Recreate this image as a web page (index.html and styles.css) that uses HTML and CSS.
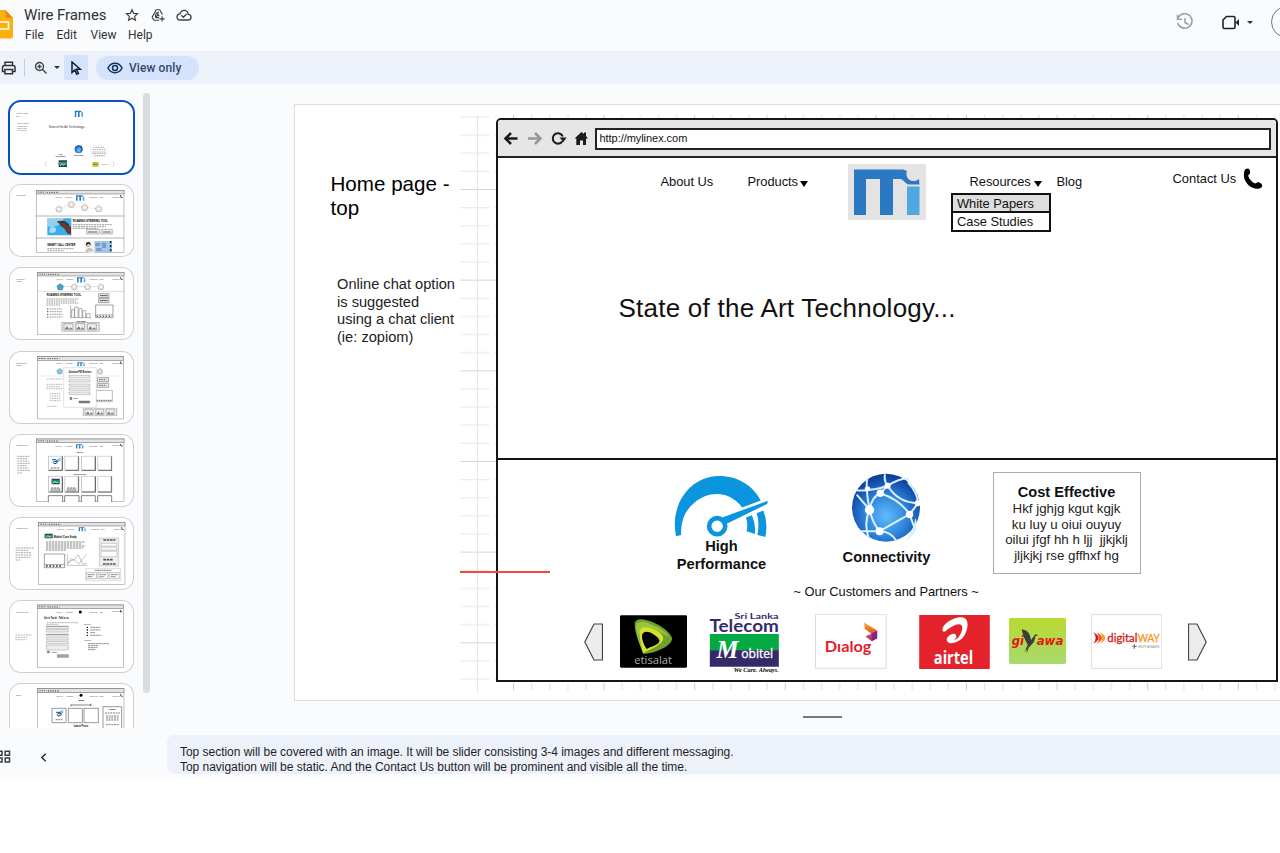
FILE: index.html
```html
<!DOCTYPE html>
<html lang="en">
<head>
<meta charset="utf-8">
<title>Wire Frames</title>
<link rel="stylesheet" href="styles.css">
</head>
<body>
<svg class="defs" width="0" height="0" aria-hidden="true">
  <defs>
    <symbol id="mi" viewBox="0 0 77 56" preserveAspectRatio="none">
      <path fill="#2b79c2" d="M6 5.500h49l4 1.500c-2 4 1 10 6 10 3 0 4-.5 6-2l.5 5.500H61c-3 0-6-5.500-9-5.500h-7v36H32V15H18v36H6z"/>
      <path fill="#4fa9e0" d="M59 22.500h12.500V51H59z"/>
    </symbol>
    <symbol id="phone" viewBox="0 0 20 22"><path d="M1.500 2.500C2 .5 5.500-.3 6.500 1.500c.8 2 .9 3.800 0 4.800C5.200 7 5 7.500 5.600 9c1.300 3 3.500 5 6 6.300 1.300.6 1.600-.7 3-1 2-.2 4.600 1.600 4.600 3.500 0 2-3 3.300-5.200 3C8.500 20.500 3 16 1.500 11 .5 8 .8 5 1.500 2.500z"/></symbol>
    <symbol id="chrome" viewBox="0 0 265 190" preserveAspectRatio="none" overflow="visible">
      <rect x=".8" y=".8" width="263" height="188" fill="#fff" stroke="#999" stroke-width="1.800"/>
      <rect x="1" y="1" width="263" height="11" fill="#e4e4e4" stroke="#777" stroke-width="1.800"/>
      <path d="M6 6.500h22M32 7h36" stroke="#555" stroke-width="3" stroke-dasharray="4 3"/>
      <g font-size="6" fill="#444"><text x="57" y="24" textLength="20" lengthAdjust="spacingAndGlyphs">About Us</text><text x="88" y="24" textLength="20" lengthAdjust="spacingAndGlyphs">Products</text><text x="160" y="24" textLength="24" lengthAdjust="spacingAndGlyphs">Resources</text><text x="191" y="24" textLength="10" lengthAdjust="spacingAndGlyphs">Blog</text><text x="229" y="23" textLength="23" lengthAdjust="spacingAndGlyphs">Contact Us</text></g>
      <use href="#phone" x="252" y="15" width="9" height="9"/>
    </symbol>
    <symbol id="penta" viewBox="0 0 20 20"><path d="M10 1l9 7-3.500 10h-11L1 8z" stroke="#888" stroke-width="1.500"/><circle cx="10" cy="10.500" r="5" fill="none" stroke="#999"/></symbol>
    <symbol id="card" viewBox="0 0 42 44" preserveAspectRatio="none"><path d="M1 1h38v40H1z" fill="#fff" stroke="#888" stroke-width="1.500"/><path d="M40.500 2v41H2" fill="none" stroke="#333" stroke-width="2"/></symbol>
    <symbol id="pics" viewBox="0 0 110 28"><path d="M1 1h108v26H1zM7 5h26v18H7zM41 5h26v18H41zM75 5h26v18H75z" fill="#eee" stroke="#777" stroke-width="1.500"/><path d="M9 21l7-9 6 9 4-6 6 6zM43 21l7-9 6 9 4-6 6 6zM77 21l7-9 6 9 4-6 6 6z" fill="#777"/></symbol>
    <linearGradient id="lime" x2="0" y2="1"><stop stop-color="#bada30"/><stop offset="1" stop-color="#a7d96f"/></linearGradient>
    <radialGradient id="ball" cx=".5" cy=".62" r=".6"><stop stop-color="#62bbfa"/><stop offset=".5" stop-color="#2f86dc"/><stop offset="1" stop-color="#0a3d9c"/></radialGradient>
    <linearGradient id="flame" x2="0" y2="1"><stop stop-color="#fbb03b"/><stop offset=".5" stop-color="#ed5a24"/><stop offset="1" stop-color="#a32a8d"/></linearGradient>
    <pattern id="rules" patternUnits="userSpaceOnUse" x="0" y="84" width="40" height="90.660"><path d="M0 .5h40" stroke="#d6d6d6"/><path d="M0 18.600h34M0 36.800h34M0 54.900h34M0 73h34" stroke="#e6e6e6"/></pattern>
    <pattern id="ticks" patternUnits="userSpaceOnUse" x="218" y="0" width="90.600" height="700"><path d="M.5 0v700" stroke="#ccc"/><path d="M18.600 0v700M36.800 0v700M54.900 0v700M73 0v700" stroke="#dedede"/></pattern>
  </defs>
</svg>

<div class="app">
  <header class="header">
    <svg class="app-icon" viewBox="0 0 13 29"><path fill="#fbb00d" d="M0 0h5.500L13 8v18.500a2 2 0 0 1-2 2H0z"/><path fill="#f08a10" d="M5.500 0L13 8H5.500z"/><path fill="none" stroke="#fff" stroke-width="1.600" d="M0 12h8.500v7H0"/></svg>
    <div class="heading">
      <div class="title-row">
        <span class="doc-title">Wire Frames</span>
        <svg class="ti star" viewBox="0 0 24 24"><path d="M12 3l2.700 6.200 6.800.6-5.100 4.500 1.500 6.700-5.900-3.500L6.100 21l1.500-6.700-5.100-4.500 6.800-.6z"/></svg>
        <svg class="ti drive" viewBox="0 0 24 24"><path d="M14 21H5l-3-5L9 3h6l4.500 8M14 16.500H8.500l3.500-6 2 3.500M8.500 16.500C6 13 8.500 7.500 13.500 7.500M19 14v9M14.500 18.500h9"/></svg>
        <svg class="ti cloud" viewBox="0 0 24 24"><path d="M6.500 19.500C3.500 19.500 1.500 17.500 1.500 15s2-4.500 4.500-4.700C7 7 9 5 12 5c3.500 0 6 2.500 6.400 6 2.500.2 4.100 2 4.100 4.200 0 2.500-2 4.300-4.500 4.300zM8 12.500l3 3 5-5"/></svg>
      </div>
      <nav class="menus"><span class="m-file">File</span><span class="m-edit">Edit</span><span class="m-view">View</span><span>Help</span></nav>
    </div>
    <div class="header-tools">
      <svg class="history" viewBox="0 0 18 18"><path d="M2.200 4.600A7.300 7.300 0 1 1 1.700 10M1.500 1.800v4.400H6M9 5v4.500l3.500 2"/></svg>
      <svg class="camera" viewBox="0 0 18 15"><path d="M4.500 1.500h7c1 0 1.500.5 1.500 1.500v9c0 1-.5 1.500-1.500 1.500h-9C1.500 13.500 1 13 1 12V5z"/><path class="lens" d="M13.500 7.500L17 4v7z"/></svg>
      <i class="caret"></i>
      <span class="share"></span>
    </div>
  </header>

  <div class="toolbar">
    <svg class="print" viewBox="0 0 16 14"><path d="M4 4.500V1.200h7.500v3.300M4 10.500H1.500v-4c0-1.300.8-2 2-2h8.500c1.300 0 2 .7 2 2v4h-2.500M4 8.500h7.500v4.300H4z"/></svg>
    <span class="sep"></span>
    <svg class="magnify" viewBox="0 0 14 14"><circle cx="5.500" cy="5.500" r="4"/><path d="M8.500 8.500l4 4M5.500 3.500v4M3.500 5.500h4"/></svg>
    <i class="caret"></i>
    <span class="pointer"><svg viewBox="0 0 12 14"><path d="M2 1v10.500l2.800-2.500 2 4.300 1.600-.8L6.500 8.300h3.800z"/></svg></span>
    <span class="view-only"><svg viewBox="0 0 16 12"><path d="M1 6c3-6.300 11-6.300 14 0-3 6.300-11 6.300-14 0z"/><circle cx="8" cy="6" r="2.500"/></svg>View only</span>
  </div>

  <main class="workspace">
    <aside class="side">
      <div class="film">
        <div class="thumbs">
          <svg class="thumb active" viewBox="27 33 375 219">
            <g font-size="7" fill="#555"><text x="49" y="72">Home page -</text><text x="49" y="80">top</text><g font-size="5.500"><text x="51" y="103">Online chat op</text><text x="51" y="110">is suggested</text><text x="51" y="117">using a chat</text><text x="51" y="124">(ie: zopiom)</text></g></g>
            <use href="#mi" x="222" y="60" width="29" height="23"/>
            <text x="146" y="115" font-size="9" textLength="112" lengthAdjust="spacingAndGlyphs" fill="#333">State of the Art Technology...</text>
            <circle cx="236" cy="178" r="12" fill="url(#ball)"/><path d="M228 170l13 5-4 13M231 184l10-9" stroke="#b8ddfa" fill="none"/>
            <g font-size="5" font-weight="bold" text-anchor="middle" fill="#333"><text x="182" y="194">High</text><text x="182" y="200">Performance</text><text x="236" y="198">Connectivity</text></g>
            <rect x="272" y="165" width="51" height="35" fill="#fff" stroke="#ddd"/>
            <path d="M280 172h34M277 179h42M278 186h40M276 191h43M282 197h32" stroke="#888" stroke-width="2" stroke-dasharray="5 2"/>
            <path d="M140 215l-4 8 4 8M338 215l4 8-4 8" stroke="#aaa" fill="none" stroke-width="1.500"/>
            <path fill="#39356e" d="M176 211h25v20h-25z"/><path fill="#14a84b" d="M176 216h25v9h-25z"/><path d="M180 228l6-7 4 5 5-4" stroke="#fff" stroke-width="2" fill="none"/>
            <path fill="#a9d13d" d="M277 216h19v14h-19z"/><path d="M280 223h13" stroke="#933" stroke-width="2"/><text x="305" y="225" font-size="5" fill="#d33">digital<tspan fill="#e90">WAY</tspan></text>
          </svg>
          <svg class="thumb" viewBox="27 283 375 219">
            <text x="49" y="320" font-size="7" fill="#555">Products</text>
            <use href="#chrome" x="108" y="301" width="265" height="189"/><use href="#mi" x="226" y="315" width="29" height="20"/>
            <path d="M188 353l16-7M224 345l20 7M265 354l20 3" stroke="#bbb"/>
            <g fill="#fff"><use href="#penta" x="166" y="347" width="22" height="22"/><use href="#penta" x="203" y="333" width="22" height="22"/><use href="#penta" x="243" y="342" width="22" height="22"/><use href="#penta" x="285" y="346" width="22" height="22"/></g>
            <path d="M108 379h264M108 445h264" stroke="#666" stroke-width="1.500"/>
            <path fill="#39aeea" d="M142 386h72v51h-72z"/><path fill="#dceff8" d="M142 386h50l-8 18c-14 2-20 12-42 6z" opacity=".55"/><path fill="#a9dcf5" d="M150 415c10-6 20-2 18 8-4 8-16 8-20 4z"/><path d="M176 398l8-5 29 18v24c-17-1-13-16-25-22-7-3-11-8-12-15z" fill="#623b31"/><path d="M172 397l20-1 14 10" stroke="#333" stroke-width="5" fill="none"/>
            <text x="218" y="398" font-size="11" font-weight="bold" textLength="106" lengthAdjust="spacingAndGlyphs">ROAMING STEERING TOOL</text>
            <path d="M218 405h117M218 411h100M218 416h75" stroke="#888" stroke-width="2.500" stroke-dasharray="6 2"/><path fill="#eee" stroke="#444" d="M260 419h38v14h-38zM303 419h34v14h-34z"/><path d="M264 427h28M308 427h24" stroke="#666" stroke-width="3"/>
            <text x="142" y="470" font-size="9" font-weight="bold" textLength="84" lengthAdjust="spacingAndGlyphs">SMART CALL CENTER</text><path d="M142 477h80M142 483h50" stroke="#888" stroke-width="2.500" stroke-dasharray="6 2"/>
            <path fill="#9ec9ea" d="M279 454h57v35h-57z"/><path fill="#f4f4f4" d="M254 454h30v35h-30z"/><circle cx="265" cy="464" r="7" fill="#222"/><circle cx="266" cy="467" r="5" fill="#ecc5a8"/><path d="M258 489c0-14 17-16 21-5" fill="#ccc" stroke="#444"/><path fill="#7f97c9" d="M286 460h14v9h-14zM306 459h12v16h-12zM289 475h15v9h-15z"/><path d="M332 454v35" stroke="#333" stroke-width="5" stroke-dasharray="7 5"/>
          </svg>
          <svg class="thumb" viewBox="27 532 375 219">
            <g font-size="7" fill="#555"><text x="49" y="570">Product</text><text x="49" y="578">Page</text></g>
            <use href="#chrome" x="112" y="547" width="261" height="188"/><use href="#mi" x="229" y="561" width="29" height="19"/>
            <path d="M190 591h102M112 605h260" stroke="#999"/>
            <use href="#penta" x="169" y="580" width="23" height="23" fill="#2aa9d8"/><g fill="#fff"><use href="#penta" x="212" y="581" width="21" height="21"/><use href="#penta" x="252" y="581" width="21" height="21"/><use href="#penta" x="292" y="581" width="21" height="21"/></g>
            <text x="140" y="618" font-size="9" font-weight="bold" textLength="103" lengthAdjust="spacingAndGlyphs">ROAMING STEERING TOOL</text>
            <path d="M140 628h95M140 634h90M140 640h95M140 646h40M149 658h38M149 666h38M149 674h38M149 682h38" stroke="#888" stroke-width="2.500" stroke-dasharray="5 2"/><path d="M141 658h4M141 666h4M141 674h4M141 682h4" stroke="#444" stroke-width="3"/>
            <path fill="#fff" stroke="#666" stroke-width="1.500" d="M212 648v36h61M215 684v-24h8v24M224 684v-32h10v32M237 684v-27h9v27M248 684v-21h9v21M260 684v-12h10v12"/>
            <path fill="#eee" stroke="#555" stroke-width="1.500" d="M296 612h31v12h-31zM296 627h31v12h-31z"/><path d="M300 618h23M300 633h23" stroke="#555" stroke-width="3"/><path fill="#fff" stroke="#444" stroke-width="1.500" d="M287 646h52v38h-52zM287 676h52"/><path d="M290 680h46" stroke="#333" stroke-width="3" stroke-dasharray="4 5"/>
            <text x="230" y="696" font-size="6" font-weight="bold" textLength="27" lengthAdjust="spacingAndGlyphs">Case Studies</text><use href="#pics" x="183" y="697" width="117" height="29"/>
          </svg>
          <svg class="thumb" viewBox="27 15 375 219">
            <g font-size="7" fill="#555"><text x="49" y="54">Download</text><text x="49" y="61">Page</text></g>
            <use href="#chrome" x="111" y="31" width="261" height="189"/><use href="#mi" x="230" y="47" width="26" height="15"/><path d="M112 90h258" stroke="#ccc"/>
            <use href="#penta" x="169" y="66" width="20" height="20" fill="#76d7f0"/><use href="#penta" x="290" y="66" width="20" height="20" fill="#eee"/>
            <path d="M140 99h49M140 115h48M140 122h40M140 128h47M149 143h32M149 150h32M149 157h32M149 164h32M142 181h30" stroke="#aaa" stroke-width="2.500" stroke-dasharray="5 2"/>
            <path fill="#eee" stroke="#555" stroke-width="1.500" d="M292 95h34v12h-34zM292 112h34v12h-34z"/><path fill="#fff" stroke="#777" stroke-width="1.500" d="M288 133h49v34h-49z"/><path d="M289 163h46M297 101h22M297 118h22" stroke="#666" stroke-width="3" stroke-dasharray="5 2"/>
            <use href="#pics" x="244" y="185" width="112" height="26"/><path fill="#fff" stroke="#aaa" d="M191 65h98v119h-98z"/>
            <text x="206" y="81" font-size="8" font-weight="bold" textLength="68" lengthAdjust="spacingAndGlyphs">Download PDF Brochure</text><path fill="#eee" stroke="#777" d="M207 88h63v7h-63zM207 101h63v7h-63zM207 114h63v7h-63zM207 126h63v7h-63zM207 138h63v8h-63z"/><text x="217" y="160" font-size="6">I agree</text><path d="M210 154h5v7h-5zM237 165h32v6h-32z" fill="#888" stroke="#333"/>
          </svg>
          <svg class="thumb" viewBox="27 266 375 219">
            <text x="49" y="303" font-size="7" fill="#555">Customers</text><path d="M52 333h36M52 340h30M52 347h34M52 354h37M52 361h28M52 368h34M52 375h38M52 383h14" stroke="#999" stroke-width="2.500" stroke-dasharray="6 2"/>
            <use href="#chrome" x="108" y="280" width="265" height="190"/><use href="#mi" x="226" y="295" width="26" height="16"/>
            <g font-size="6.500" font-weight="bold"><text x="230" y="324" textLength="19" lengthAdjust="spacingAndGlyphs">TELCO</text><text x="222" y="388" textLength="36" lengthAdjust="spacingAndGlyphs">BANKS &amp; OTHER</text></g>
            <use href="#card" x="144" y="331" width="45" height="46"/><use href="#card" x="193" y="331" width="45" height="46"/><use href="#card" x="243" y="331" width="45" height="46"/><use href="#card" x="292" y="331" width="45" height="46"/>
            <use href="#card" x="144" y="391" width="45" height="51"/><use href="#card" x="193" y="391" width="45" height="51"/><use href="#card" x="243" y="391" width="45" height="51"/><use href="#card" x="292" y="391" width="45" height="51"/>
            <path d="M145 470v-19h43v19M194 470v-19h43v19M244 470v-19h42v19M293 470v-19h42v19" fill="#fff" stroke="#444" stroke-width="2"/>
            <path d="M156 343h9c9 0 9 12 0 12-5 0-7-4-3-7h11" fill="none" stroke="#124b83" stroke-width="3"/><path d="M172 344l10-5M174 348l8-4" stroke="#37a8df" stroke-width="3"/><path d="M152 368h28M153 428h28M201 428h28" stroke="#777" stroke-width="3" stroke-dasharray="7 2"/><path fill="#39356e" d="M155 400h24v17h-24z"/><path fill="#14a84b" d="M155 405h24v8h-24z"/><path d="M158 414l7-6 4 5 6-3" fill="none" stroke="#fff" stroke-width="2"/><path fill="#ddd" stroke="#333" d="M153 431h27v5h-27zM201 431h27v5h-27z"/>
          </svg>
          <svg class="thumb" viewBox="27 515 375 219">
            <text x="49" y="552" font-size="7" fill="#555">Customers</text><path d="M47 608h54M47 615h40M47 622h48M47 629h50M47 636h43M47 644h16" stroke="#999" stroke-width="2.500" stroke-dasharray="6 2"/>
            <use href="#chrome" x="115" y="530" width="261" height="189"/><use href="#mi" x="234" y="544" width="25" height="15"/>
            <path fill="#39356e" d="M134 565h24v14h-24z"/><path fill="#14a84b" d="M134 569h24v7h-24z"/><path d="M138 577l6-6 4 5 6-3" fill="none" stroke="#fff" stroke-width="2"/><text x="161" y="579" font-size="9" font-weight="bold" textLength="69" lengthAdjust="spacingAndGlyphs">Mobitel Case Study</text>
            <path d="M138 590h117M138 596h108M138 602h118M138 608h112M138 614h60" stroke="#888" stroke-width="3" stroke-dasharray="7 2"/><path fill="#fff" stroke="#444" stroke-width="1.500" d="M133 626h61v41h-61zM133 658h61"/><path d="M138 662h50" stroke="#333" stroke-width="4" stroke-dasharray="5 5"/><path fill="none" stroke="#888" stroke-width="1.500" d="M202 626v34h60M204 657l10-18 7 7 14-18 13 29 12-4M204 651l18-9 14 14 24-29"/>
            <path fill="#eee" stroke="#888" d="M298 578h58v84h-58z"/><path fill="#fff" stroke="#777" d="M303 594h48v8h-48zM303 606h48v8h-48zM303 618h48v16h-48z"/><path d="M310 584h36M310 643h28M309 656h38" stroke="#555" stroke-width="5" stroke-dasharray="8 2"/><path fill="#fff" stroke="#999" d="M257 670h105v36H257z"/><path fill="#fff" stroke="#444" d="M260 682h30v18h-30zM294 682h30v18h-30zM328 682h30v18h-30z"/><path d="M284 675h50M264 688h20M298 688h20M333 688h20M264 694h14M298 694h15M333 694h15" stroke="#666" stroke-width="2.500" stroke-dasharray="6 1"/>
          </svg>
          <svg class="thumb" viewBox="27 30 375 219">
            <text x="49" y="68" font-size="7" fill="#555">Contact Us</text><path d="M46 135h50M46 142h36M46 149h34" stroke="#999" stroke-width="2" stroke-dasharray="6 2"/>
            <use href="#chrome" x="111" y="44" width="261" height="189"/><circle cx="241" cy="66" r="4.500"/>
            <text x="132" y="86" font-size="8.500" font-weight="bold" textLength="74" lengthAdjust="spacingAndGlyphs">Get in Touch - Talk to us</text><path d="M140 98h95M140 103h35" stroke="#888" stroke-width="2" stroke-dasharray="6 2"/>
            <path fill="#eee" stroke="#777" d="M139 109h66v7h-66zM139 119h66v7h-66zM139 133h66v5h-66zM139 143h66v7h-66zM139 154h66v7h-66zM139 165h66v15h-66z"/><path d="M139 109h66M139 133h66" stroke="#333"/><text x="153" y="190" font-size="6">I agree</text><path d="M142 183h6v6h-6zM172 194h33v8h-33z" fill="#aaa" stroke="#333"/>
            <g font-size="6" fill="#333"><text x="251" y="104">Contact</text><text x="251" y="153">Address</text></g><path d="M271 112h30M271 120h30M271 128h14M271 136h33M264 161h64M264 167h30M264 173h28M264 179h22" stroke="#777" stroke-width="2.500" stroke-dasharray="7 1"/><path d="M262 110v30" stroke="#222" stroke-width="4" stroke-dasharray="4 4"/>
          </svg>
          <svg class="thumb" viewBox="27 279 375 219">
            <text x="49" y="317" font-size="7" fill="#555">Blog</text>
            <use href="#chrome" x="112" y="295" width="261" height="205"/><circle cx="243" cy="316" r="4.500"/><text x="236" y="334" font-size="7" font-weight="bold">Blog</text><path d="M213 345h62M213 343v6M272 341v7" stroke="#444" stroke-width="2"/>
            <path fill="#fff" stroke="#666" stroke-width="2" d="M156 355h42v43h-42zM205 355h42v43h-42zM252 355h43v43h-43zM309 350h56v80h-56z"/><path d="M168 367h9c9 0 9 11 0 11-5 0-7-4-3-7h9" fill="none" stroke="#124b83" stroke-width="3"/><path d="M180 365l10-3M183 369l7-3" stroke="#37a8df" stroke-width="3"/><path d="M167 389h20M315 369h45M318 378h38M318 384h38M318 390h38M318 404h38" stroke="#666" stroke-width="2.500" stroke-dasharray="6 2"/><text x="327" y="361" font-size="7" font-weight="bold">Posts</text><text x="221" y="410" font-size="8" font-weight="bold" textLength="44" lengthAdjust="spacingAndGlyphs">Latest Posts</text>
          </svg>
        </div>
        <div class="scrollbar"></div>
      </div>
      <div class="side-tools">
        <svg class="grid-icon" viewBox="0 0 11 13"><path d="M-4 1.200h6v4h-6zM-4 8h6v4h-6zM5.200 1.200h4.300v4H5.200zM5.200 8h4.300v4H5.200z"/></svg>
        <svg class="chevron" viewBox="0 0 6 8"><path d="M5 .7L1.500 4 5 7.300"/></svg>
      </div>
    </aside>

    <section class="stage">
      <div class="slide">
        <svg class="graph" width="990" height="596"><path fill="url(#rules)" d="M165 10h36v578h-36z"/><path d="M182.500 10v578" stroke="#e6e6e6"/><path fill="url(#ticks)" d="M201 10h785v4H201zM201 578h785v7H201z"/></svg>
        <p class="note-title">Home page -<br>top</p>
        <p class="note-chat">Online chat option<br>is suggested<br>using a chat client<br>(ie: zopiom)</p>

        <div class="browser">
          <div class="browser-bar">
            <svg class="bi" viewBox="0 0 84 20" width="84" height="20">
              <path d="M15.500 10.500H3.500M9 5l-5.500 5.500L9 16" fill="none" stroke="#1c1c1c" stroke-width="2.600"/>
              <path d="M26 10.500h11.500M33 5l5.500 5.500L33 16" fill="none" stroke="#999" stroke-width="2.600"/>
              <path d="M60.500 13a5.200 5.200 0 1 1 .3-4.500" fill="none" stroke="#1c1c1c" stroke-width="2"/><path d="M57.500 9.500h7L61.500 14z" fill="#1c1c1c"/>
              <path fill="#1c1c1c" d="M72.500 10.500L79.500 4l2.500 2V4.500h2V8l2 2.500h-2V17H81v-4.500h-3V17h-3.700v-6.500z"/>
            </svg>
            <div class="url">http://mylinex.com</div>
          </div>
          <div class="hero">
            <nav class="site-nav">
              <span class="link">About Us</span>
              <span class="link">Products<i class="tri"></i></span>
              <svg class="logo"><rect width="78" height="56" fill="#e3e3e3"/><use href="#mi" width="77" height="56"/></svg>
              <div class="link has-menu">Resources<i class="tri"></i>
                <ul class="menu"><li>White Papers</li><li>Case Studies</li></ul>
              </div>
              <span class="link">Blog</span>
              <span class="contact">Contact Us<svg><use href="#phone"/></svg></span>
            </nav>
            <h1>State of the Art Technology...</h1>
          </div>
          <div class="features">
            <div class="feature">
              <svg class="gauge" viewBox="672 76 284 188">
                <path fill="#0a95de" d="M681 259c-19-92 39-178 127-180 61 0 105 31 126 73l-55 21c-39-52-101-51-145-13-28 25-38 52-38 95z"/>
                <path fill="#0a95de" d="M890 203l18-7q12 26 9 56l-25-8q5-24-2-41zM922 190l20-8q15 37 6 79l-24-6q8-36-2-65z"/>
                <path fill="#0a95de" d="M819 203l136-50-1 9-126 62z"/><circle cx="804" cy="229" r="24" fill="#fff" stroke="#0a95de" stroke-width="14"/>
              </svg>
              <strong>High<br>Performance</strong>
            </div>
            <div class="feature">
              <svg class="globe" viewBox="216 68 208 208">
                <circle cx="320" cy="171" r="101" fill="url(#ball)"/>
                <g fill="none" stroke="#d8efff" stroke-width="6"><path d="M233 120q60 0 90-14 50-28 66-20M317 72q-4 20 8 34l-22 22q-25 10-32 49l-38-45M265 84q-7 20 6 94-18 38-2 85M271 178q10 40 30 63l88-50M303 128q60 20 87 63l18 48M325 106q30 50 90 52M301 241q35 0 50 30M390 191l25-33q0-30-30-62M240 241l60 0"/></g>
                <g fill="#fff"><circle cx="271" cy="178" r="14"/><circle cx="390" cy="191" r="11"/><circle cx="301" cy="241" r="12"/><circle cx="303" cy="128" r="11"/><circle cx="325" cy="106" r="9"/><circle cx="265" cy="115" r="8"/><circle cx="414" cy="158" r="9"/></g>
                <path d="M377 271q48-30 30-70-3 35-30 70z" fill="#d8efff"/>
              </svg>
              <strong>Connectivity</strong>
            </div>
            <div class="cost"><strong>Cost Effective</strong><p>Hkf jghjg kgut kgjk<br>ku luy u oiui ouyuy<br>oilui jfgf hh h ljj &nbsp;jjkjklj<br>jljkjkj rse gffhxf hg</p></div>
          </div>
          <div class="partners-title">~ Our Customers and Partners ~</div>
          <div class="partners">
            <svg class="arrow" viewBox="0 0 19 38"><path d="M10 1h8.500v36H10L.8 19z"/></svg>
            <svg class="etisalat" viewBox="150 45 201 157"><rect x="150" y="45" width="201" height="157" rx="4"/><path fill="#6f9f2c" d="M194 71c0-12 14-18 34-12 37 9 73 35 78 54 4 18-41 45-86 48-10-27-26-61-26-90z"/><path fill="#9ac43b" d="M199 74c2-11 21-12 37-5 35 13 58 30 60 42-18-17-68-35-86-22-7 8 0 39 9 67-9-22-23-59-20-82z"/><path fill="#d4e02b" d="M208 96c0-16 22-19 40-10 20 7 32 18 32 29 0 15-34 30-61 43-5-20-11-43-11-62z"/><path d="M216 108c0-16 16-18 33-7 18 12 25 21 14 29-10 8-21 8-33 16-6-8-14-25-14-38z"/><text x="193" y="190" font-family="Open Sans" font-size="32" fill="#aaa" textLength="113" lengthAdjust="spacingAndGlyphs">etisalat</text></svg>
            <svg class="mobitel" viewBox="418 34 212 186"><g fill="#352a69" font-family="Lato" font-weight="bold"><text x="494" y="56" font-size="25" textLength="132" lengthAdjust="spacingAndGlyphs">Sri Lanka</text><text x="419" y="95" font-size="50" textLength="208" lengthAdjust="spacingAndGlyphs">Telecom</text></g><path fill="#05a944" d="M420 100h207v50H420z"/><path fill="#352a69" d="M420 149h207v49H420z"/><text x="440" y="173" font-family="Liberation Serif" font-style="italic" font-weight="bold" font-size="74" fill="#fff">M</text><text x="514" y="171" font-family="Open Sans" font-size="39" fill="#fff" stroke="#fff" textLength="96" lengthAdjust="spacingAndGlyphs">obitel</text><text x="492" y="214" font-family="Liberation Serif" font-style="italic" font-weight="bold" font-size="18" textLength="135" lengthAdjust="spacingAndGlyphs">We Care. Always.</text></svg>
            <svg class="dialog" viewBox="736 43 214 164"><path fill="#fff" stroke="#ddd" stroke-width="3" d="M737 44h211v161H737z"/><text x="765" y="155" font-family="Lato" font-weight="bold" font-size="47" fill="#e3202d" textLength="139" lengthAdjust="spacingAndGlyphs">Dıalog</text><path fill="url(#flame)" d="M882 68l39 24v24l-16 8-19-15 18-7-20-15z"/><path fill="#82248b" d="M904 101l17-8v22l-15 8z"/></svg>
            <svg class="airtel" viewBox="57 59 213 163"><path fill="#e4222c" d="M57 59h213v163H57z"/><path fill="#fff" d="M127 105c0-20 34-40 58-39 25 1 22 38 4 61-15 17-48 25-49 7-1-12 25-28 29-12 2 6-5 13-10 11 13 4 27-18 28-35 1-17-19-13-38 0-12 8-18 17-22 7z"/><text x="101" y="208" font-family="Open Sans" font-weight="bold" font-size="55" fill="#fff" textLength="119" lengthAdjust="spacingAndGlyphs">airtel</text></svg>
            <svg class="giyawa" viewBox="327 69 171 138"><rect x="327" y="69" width="171" height="138" rx="5" fill="url(#lime)"/><g font-family="DejaVu Sans" font-style="italic" font-weight="bold" font-size="36" fill="#e21717"><text x="335" y="149" textLength="37" lengthAdjust="spacingAndGlyphs">gi</text><text x="410" y="149" textLength="80" lengthAdjust="spacingAndGlyphs">awa</text></g><path fill="#39403a" d="M365 103c20 2 25 15 28 32l13-17 9 2-9 4c0 20-18 31-32 47l9-22c-8-15-15-27-18-46z"/><path d="M387 151l-7 21" stroke="#555" stroke-width="3"/></svg>
            <svg class="digital" viewBox="573 58 213 163"><path fill="#fff" stroke="#ddd" stroke-width="3" d="M574 59h211v161H574z"/><path fill="#d71920" d="M580 112q32 17 0 34 14-17 0-34z"/><path fill="#ec5a24" d="M590 112q32 17 0 34 14-17 0-34z"/><path fill="#f7a021" d="M600 112q32 17 0 34 14-17 0-34z"/><text x="622" y="140" font-family="Lato" font-size="36" fill="#d71920" stroke="#d71920" textLength="90" lengthAdjust="spacingAndGlyphs">digital</text><text x="713" y="140" font-family="Lato" font-size="35" fill="#f59a23" stroke="#f59a23" textLength="66" lengthAdjust="spacingAndGlyphs">WAY</text><path d="M703 148v13M697 154h13" stroke="#777" stroke-width="4"/><text x="713" y="158" font-family="Liberation Sans" font-size="9" fill="#888" textLength="65" lengthAdjust="spacingAndGlyphs">GRUPO ASSADEM</text></svg>
            <svg class="arrow next" viewBox="0 0 19 38"><path d="M9 1H.5v36H9l9.200-18z"/></svg>
          </div>
        </div>
        <div class="red-line"></div>
      </div>
      <div class="grip"></div>
      <div class="speaker-notes">Top section will be covered with an image. It will be slider consisting 3-4 images and different messaging.<br>Top navigation will be static. And the Contact Us button will be prominent and visible all the time.</div>
    </section>
  </main>
</div>
</body>
</html>
```
FILE: styles.css
```css
* { box-sizing: border-box; }
body { margin: 0; background: #fff; height: 853px; overflow: hidden; font-family: "Liberation Sans", Arial, sans-serif; }
p, h1, ul { margin: 0; padding: 0; }
svg { display: block; flex: none; }
.defs { position: absolute; }
.app { height: 777px; background: #f9fbfd; overflow: hidden; display: flex; flex-direction: column; }

.header { height: 51px; display: flex; flex: none; font-family: Roboto, sans-serif; color: #303236; }
.app-icon { width: 13px; height: 29px; margin-top: 10px; }
.heading { margin-left: 11px; padding-top: 5px; width: 260px; }
.title-row { display: flex; align-items: center; height: 20px; }
.doc-title { font-size: 15px; width: 101px; letter-spacing: -.1px; white-space: nowrap; }
.ti { width: 14px; height: 14px; fill: none; stroke: #3c4043; stroke-width: 2; }
.drive { margin-left: 12px; }
.cloud { margin-left: 11px; width: 16px; height: 16px; }
.menus { display: flex; font-size: 12px; line-height: 21px; margin-left: 1px; }
.m-file { width: 31.500px; } .m-edit { width: 34px; } .m-view { width: 37.500px; }
.header-tools { margin-left: auto; display: flex; align-items: center; height: 44px; width: 104px; }
.history { width: 18px; height: 18px; fill: none; stroke: #9a9da1; stroke-width: 1.500; }
.camera { width: 18px; height: 15px; margin-left: 28px; fill: none; stroke: #202124; stroke-width: 1.600; }
.camera path { stroke-linejoin: round; }
.camera .lens { fill: #202124; stroke: none; }
.caret { display: block; border: 3.500px solid transparent; border-top-color: #333; border-bottom: 0; flex: none; }
.camera + .caret { margin-left: 7px; }
.share { width: 36px; height: 32px; border: 1px solid #777; border-radius: 16px; margin-left: 18px; flex: none; }

.toolbar { height: 33px; flex: none; background: #edf1fa; display: flex; align-items: center; }
.print { width: 16px; height: 14px; margin-left: 1px; fill: none; stroke: #333; stroke-width: 1.500; }
.sep { width: 1px; height: 17px; background: #c9ccd2; margin-left: 7px; }
.magnify { width: 14px; height: 14px; margin-left: 9px; fill: none; stroke: #3c4043; stroke-width: 1.400; }
.magnify + .caret { margin-left: 6px; }
.pointer { width: 24px; height: 25px; background: #d5e2fb; border-radius: 2px; margin-left: 4px; display: flex; align-items: center; justify-content: center; }
.pointer svg { width: 12px; height: 14px; fill: none; stroke: #0d1b3e; stroke-width: 1.500; }
.view-only { width: 103px; height: 24px; margin-left: 8px; padding-left: 11px; border-radius: 12px; background: #d5e2fb; display: flex; align-items: center; gap: 6px; font: 500 12px Roboto, sans-serif; letter-spacing: .1px; color: #33496f; white-space: nowrap; }
.view-only svg { width: 16px; height: 12px; fill: none; stroke: #16305c; stroke-width: 1.500; }

.workspace { flex: 1; min-height: 0; display: flex; }
.side { width: 167px; flex: none; }
.film { height: 644px; overflow: hidden; display: flex; }
.thumbs { width: 143px; padding: 17px 0 0 9px; display: flex; flex-direction: column; gap: 10.200px; flex: none; }
.thumb { width: 125px; height: 73px; border-radius: 12px; background: #fff; box-shadow: inset 0 0 0 1px #cfcfcf; font-family: "Liberation Sans", Arial, sans-serif; }
.thumb.active { outline: 2px solid #0b51bd; outline-offset: -1px; box-shadow: none; }
.scrollbar { width: 7px; height: 600px; margin-top: 9px; border-radius: 4px; background: #dadce0; }
.side-tools { height: 49px; display: flex; padding-top: 22px; }
.grid-icon { width: 11px; height: 13px; fill: none; stroke: #3c4043; stroke-width: 1.500; }
.chevron { width: 7px; height: 9px; margin: 3px 0 0 29px; fill: none; stroke: #222; stroke-width: 1.200; }

.stage { flex: 1; min-width: 0; overflow: hidden; }
.slide { position: relative; width: 1060px; height: 597px; margin: 20px 0 0 127px; border: 1px solid #dadce0; background: #fff; }
.graph { position: absolute; left: 0; top: 0; }
.note-title { position: absolute; left: 35.500px; top: 67px; font-size: 20.600px; line-height: 24px; }
.note-chat { position: absolute; left: 42px; top: 171px; font-size: 14.640px; line-height: 17.700px; color: #222; }
.browser { position: absolute; left: 200.500px; top: 13px; width: 782.500px; height: 564px; border: 2px solid #161616; border-radius: 5px 5px 0 0; background: #fff; overflow: hidden; font-size: 12.900px; color: #111; }
.red-line { position: absolute; left: 165px; top: 466px; width: 90px; height: 2px; background: #f0493f; }

.browser-bar { height: 38px; border-bottom: 2px solid #222; background: #e6e6e6; display: flex; align-items: center; padding-left: 4px; }
.bi { overflow: visible; }
.url { width: 676px; height: 22px; border: 2px solid #222; background: #fff; margin: 1px 0 0 9.500px; padding-left: 2.500px; font-size: 11px; line-height: 17px; letter-spacing: -.05px; }
.hero { height: 302px; border-bottom: 2px solid #111; }
.site-nav { height: 131px; padding: 6px 0 0 163px; display: grid; grid-template-columns: 87px 100px 122px 87px 116px 100px; align-items: start; white-space: nowrap; }
.link { padding-top: 10px; line-height: 16px; letter-spacing: -.05px; }
.tri { display: inline-block; border: 4px solid transparent; border-top: 6px solid #000; border-bottom: 0; margin-left: 2px; position: relative; top: 1px; }
.logo { width: 78px; height: 56px; }
.has-menu { position: relative; }
.has-menu .tri { margin-left: 3px; }
.menu { position: absolute; left: -19px; top: 29px; width: 100px; border: 2px solid #111; list-style: none; background: #fff; line-height: 17px; }
.menu li { padding-left: 4.500px; height: 17px; }
.menu li:first-child { height: 18px; background: #dedede; border-bottom: 2px solid #111; }
.contact { display: flex; padding-top: 4px; line-height: 22px; }
.contact svg { width: 20px; height: 22px; margin-left: 7px; }
.hero h1 { font-size: 26px; font-weight: 400; line-height: 38px; padding-left: 121px; white-space: nowrap; letter-spacing: .24px; }
.features { height: 122px; padding: 12px 0 0 162px; display: grid; grid-template-columns: 124px 124px 148px; column-gap: 42.500px; align-items: start; font-size: 14.640px; }
.feature { text-align: center; line-height: 17.600px; display: flex; flex-direction: column; align-items: center; }
.gauge { width: 95px; height: 63px; margin: 3px 3px 0 0; }
.globe { width: 70px; height: 70px; margin: 1px 4px 6px 0; }
.globe + strong { margin-right: 3px; }
.cost { width: 148px; height: 102px; border: 1.500px solid #aaa; text-align: center; padding-top: 11px; line-height: 17px; white-space: nowrap; }
.cost p { font-size: 13.300px; line-height: 15.600px; color: #222; }
.partners-title { height: 20px; line-height: 19px; padding-left: 296px; white-space: nowrap; letter-spacing: -.06px; }
.partners { display: flex; align-items: flex-start; padding: 10px 0 0 86px; }
.arrow { width: 19px; height: 38px; margin-top: 11px; fill: #ececec; stroke: #444; stroke-width: 1.200; }
.etisalat { width: 67px; height: 53px; margin: 3px 0 0 17px; }
.mobitel { width: 71px; height: 62px; margin-left: 22px; }
.dialog { width: 72px; height: 55px; margin: 2px 0 0 35px; }
.airtel { width: 71px; height: 54px; margin: 3px 0 0 32px; }
.giyawa { width: 57px; height: 46px; margin: 6px 0 0 19px; }
.digital { width: 71px; height: 55px; margin: 2px 0 0 25px; }
.arrow.next { margin-left: 26px; }
.grip { width: 39px; height: 2px; background: #77797c; margin: 15px 0 17px 636px; }
.speaker-notes { height: 39px; background: #edf1fa; border-radius: 7px 0 0 7px; padding: 10px 0 0 13px; font-size: 12px; line-height: 14.600px; letter-spacing: -.03px; color: #1f1f1f; white-space: nowrap; }
```
